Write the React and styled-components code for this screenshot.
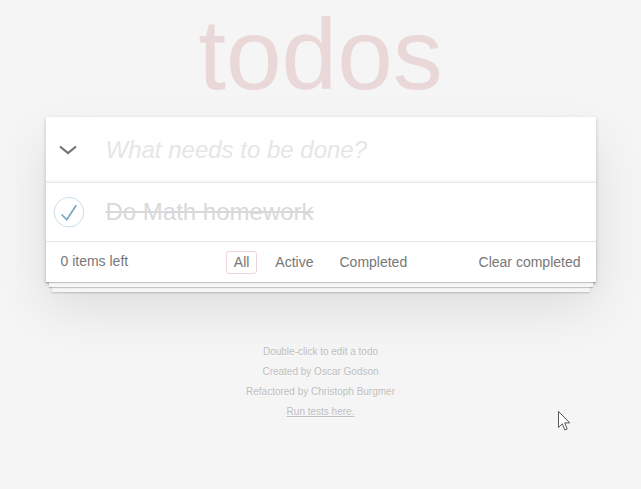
import React from "react";
import styled, { createGlobalStyle } from "styled-components";

const Global = createGlobalStyle`
  html, body { margin: 0; padding: 0; }
  body {
    background: #f5f5f5;
    font: 14px "Liberation Sans", Arial, Helvetica, sans-serif;
    line-height: 1.4em;
    color: #4d4d4d;
    -webkit-font-smoothing: antialiased;
  }
  * { box-sizing: border-box; }
`;

const Screen = styled.div`
  position: relative;
  min-height: 489px;
`;

const Page = styled.section`
  width: 550px;
  margin: 0 auto;
  display: flex;
  flex-direction: column;
`;

const Title = styled.h1`
  margin: 0;
  height: 117px;
  padding-top: 4px;
  font-size: 100px;
  line-height: 100px;
  font-weight: 100;
  text-align: center;
  color: rgba(175, 47, 47, 0.15);
`;

const TodoApp = styled.div`
  background: #fff;
  position: relative;
  box-shadow: 0 2px 4px 0 rgba(0, 0, 0, 0.2), 0 25px 50px 0 rgba(0, 0, 0, 0.1);
`;

const Header = styled.header`
  display: flex;
  align-items: center;
  height: 65px;
  box-shadow: inset 0 -2px 1px rgba(0, 0, 0, 0.03);
`;

const ToggleAll = styled.button`
  width: 60px;
  height: 65px;
  padding: 0 0 0 13px;
  border: 0;
  background: none;
  display: flex;
  align-items: center;
  justify-content: flex-start;
  cursor: pointer;
`;

const NewTodo = styled.input`
  flex: 1;
  min-width: 0;
  height: 65px;
  border: 0;
  outline: none;
  padding: 0 16px 0 0;
  background: transparent;
  font-family: "Liberation Sans", Arial, sans-serif;
  font-size: 24px;
  color: #4d4d4d;
  &::placeholder {
    font-style: italic;
    font-weight: 300;
    color: #e6e6e6;
  }
`;

const List = styled.ul`
  list-style: none;
  margin: 0;
  padding: 0;
  border-top: 1px solid #e6e6e6;
`;

const Item = styled.li`
  display: flex;
  align-items: center;
  height: 58px;
`;

const Toggle = styled.span`
  width: 60px;
  height: 40px;
  display: flex;
  align-items: center;
`;

const Label = styled.label`
  flex: 1;
  font-size: 24px;
  line-height: 1.2;
  padding: 0 15px 0 0;
  color: ${(p) => (p.$done ? "#d9d9d9" : "#4d4d4d")};
  text-decoration: ${(p) => (p.$done ? "line-through" : "none")};
`;

const Footer = styled.footer`
  display: grid;
  grid-template-columns: 1fr auto 1fr;
  align-items: center;
  height: 41px;
  padding: 0 15px;
  border-top: 1px solid #e6e6e6;
  color: #777;
  box-shadow: 0 1px 1px rgba(0, 0, 0, 0.2), 0 8px 0 -3px #f6f6f6,
    0 9px 1px -3px rgba(0, 0, 0, 0.2), 0 16px 0 -6px #f6f6f6,
    0 17px 2px -6px rgba(0, 0, 0, 0.2);
`;

const Count = styled.span`
  justify-self: start;
`;

const Filters = styled.ul`
  list-style: none;
  margin: 0;
  padding: 0;
  display: flex;
  gap: 4px;
`;

const FilterLink = styled.a`
  display: inline-block;
  margin: 3px;
  padding: 3px 7px;
  line-height: 15px;
  border: 1px solid ${(p) => (p.$selected ? "rgba(175, 47, 47, 0.2)" : "transparent")};
  border-radius: 3px;
  color: inherit;
  text-decoration: none;
`;

const Clear = styled.button`
  justify-self: end;
  border: 0;
  background: none;
  padding: 0;
  font: inherit;
  color: inherit;
  line-height: 20px;
  cursor: pointer;
`;

const Info = styled.footer`
  margin-top: 65px;
  display: flex;
  flex-direction: column;
  align-items: center;
  gap: 10px;
  color: #bfbfbf;
  font-size: 10px;
  line-height: 1;
  text-shadow: 0 1px 0 rgba(255, 255, 255, 0.5);
`;

const InfoLine = styled.p`
  margin: 0;
`;

const InfoLink = styled.a`
  color: inherit;
  text-decoration: underline;
`;

const Cursor = styled.svg`
  position: absolute;
  left: 558px;
  top: 411px;
`;

export default function App() {
  return (
    <Screen>
      <Global />
      <Page>
        <Title>todos</Title>
        <TodoApp>
          <Header>
            <ToggleAll aria-label="Mark all as complete">
              <svg width="18" height="10" viewBox="0 0 18 10">
                <polyline
                  points="1,1.5 9,8 17,1.5"
                  fill="none"
                  stroke="#737373"
                  strokeWidth="2.2"
                />
              </svg>
            </ToggleAll>
            <NewTodo placeholder="What needs to be done?" />
          </Header>
          <List>
            <Item>
              <Toggle>
                <svg width="40" height="40" viewBox="-10 -18 100 135">
                  <circle cx="50" cy="50" r="50" fill="none" stroke="#c6d8e2" strokeWidth="3" />
                  <path fill="#7ea7c2" d="M72 25L42 71 27 56l-4 4 20 20 34-52z" />
                </svg>
              </Toggle>
              <Label $done>Do Math homework</Label>
            </Item>
          </List>
          <Footer>
            <Count>0 items left</Count>
            <Filters>
              <li><FilterLink href="#/" $selected>All</FilterLink></li>
              <li><FilterLink href="#/active">Active</FilterLink></li>
              <li><FilterLink href="#/completed">Completed</FilterLink></li>
            </Filters>
            <Clear>Clear completed</Clear>
          </Footer>
        </TodoApp>
        <Info>
          <InfoLine>Double-click to edit a todo</InfoLine>
          <InfoLine>Created by Oscar Godson</InfoLine>
          <InfoLine>Refactored by Christoph Burgmer</InfoLine>
          <InfoLine><InfoLink href="#">Run tests here.</InfoLink></InfoLine>
        </Info>
      </Page>
      <Cursor width="13" height="21" viewBox="0 0 13 21">
        <path d="M0.5 0.5 L0.5 16.5 L4.3 12.8 L6.8 19 L9.2 18 L6.7 11.9 L11.8 11.9 Z" fill="#fff" stroke="#555" strokeWidth="1" />
      </Cursor>
    </Screen>
  );
}
